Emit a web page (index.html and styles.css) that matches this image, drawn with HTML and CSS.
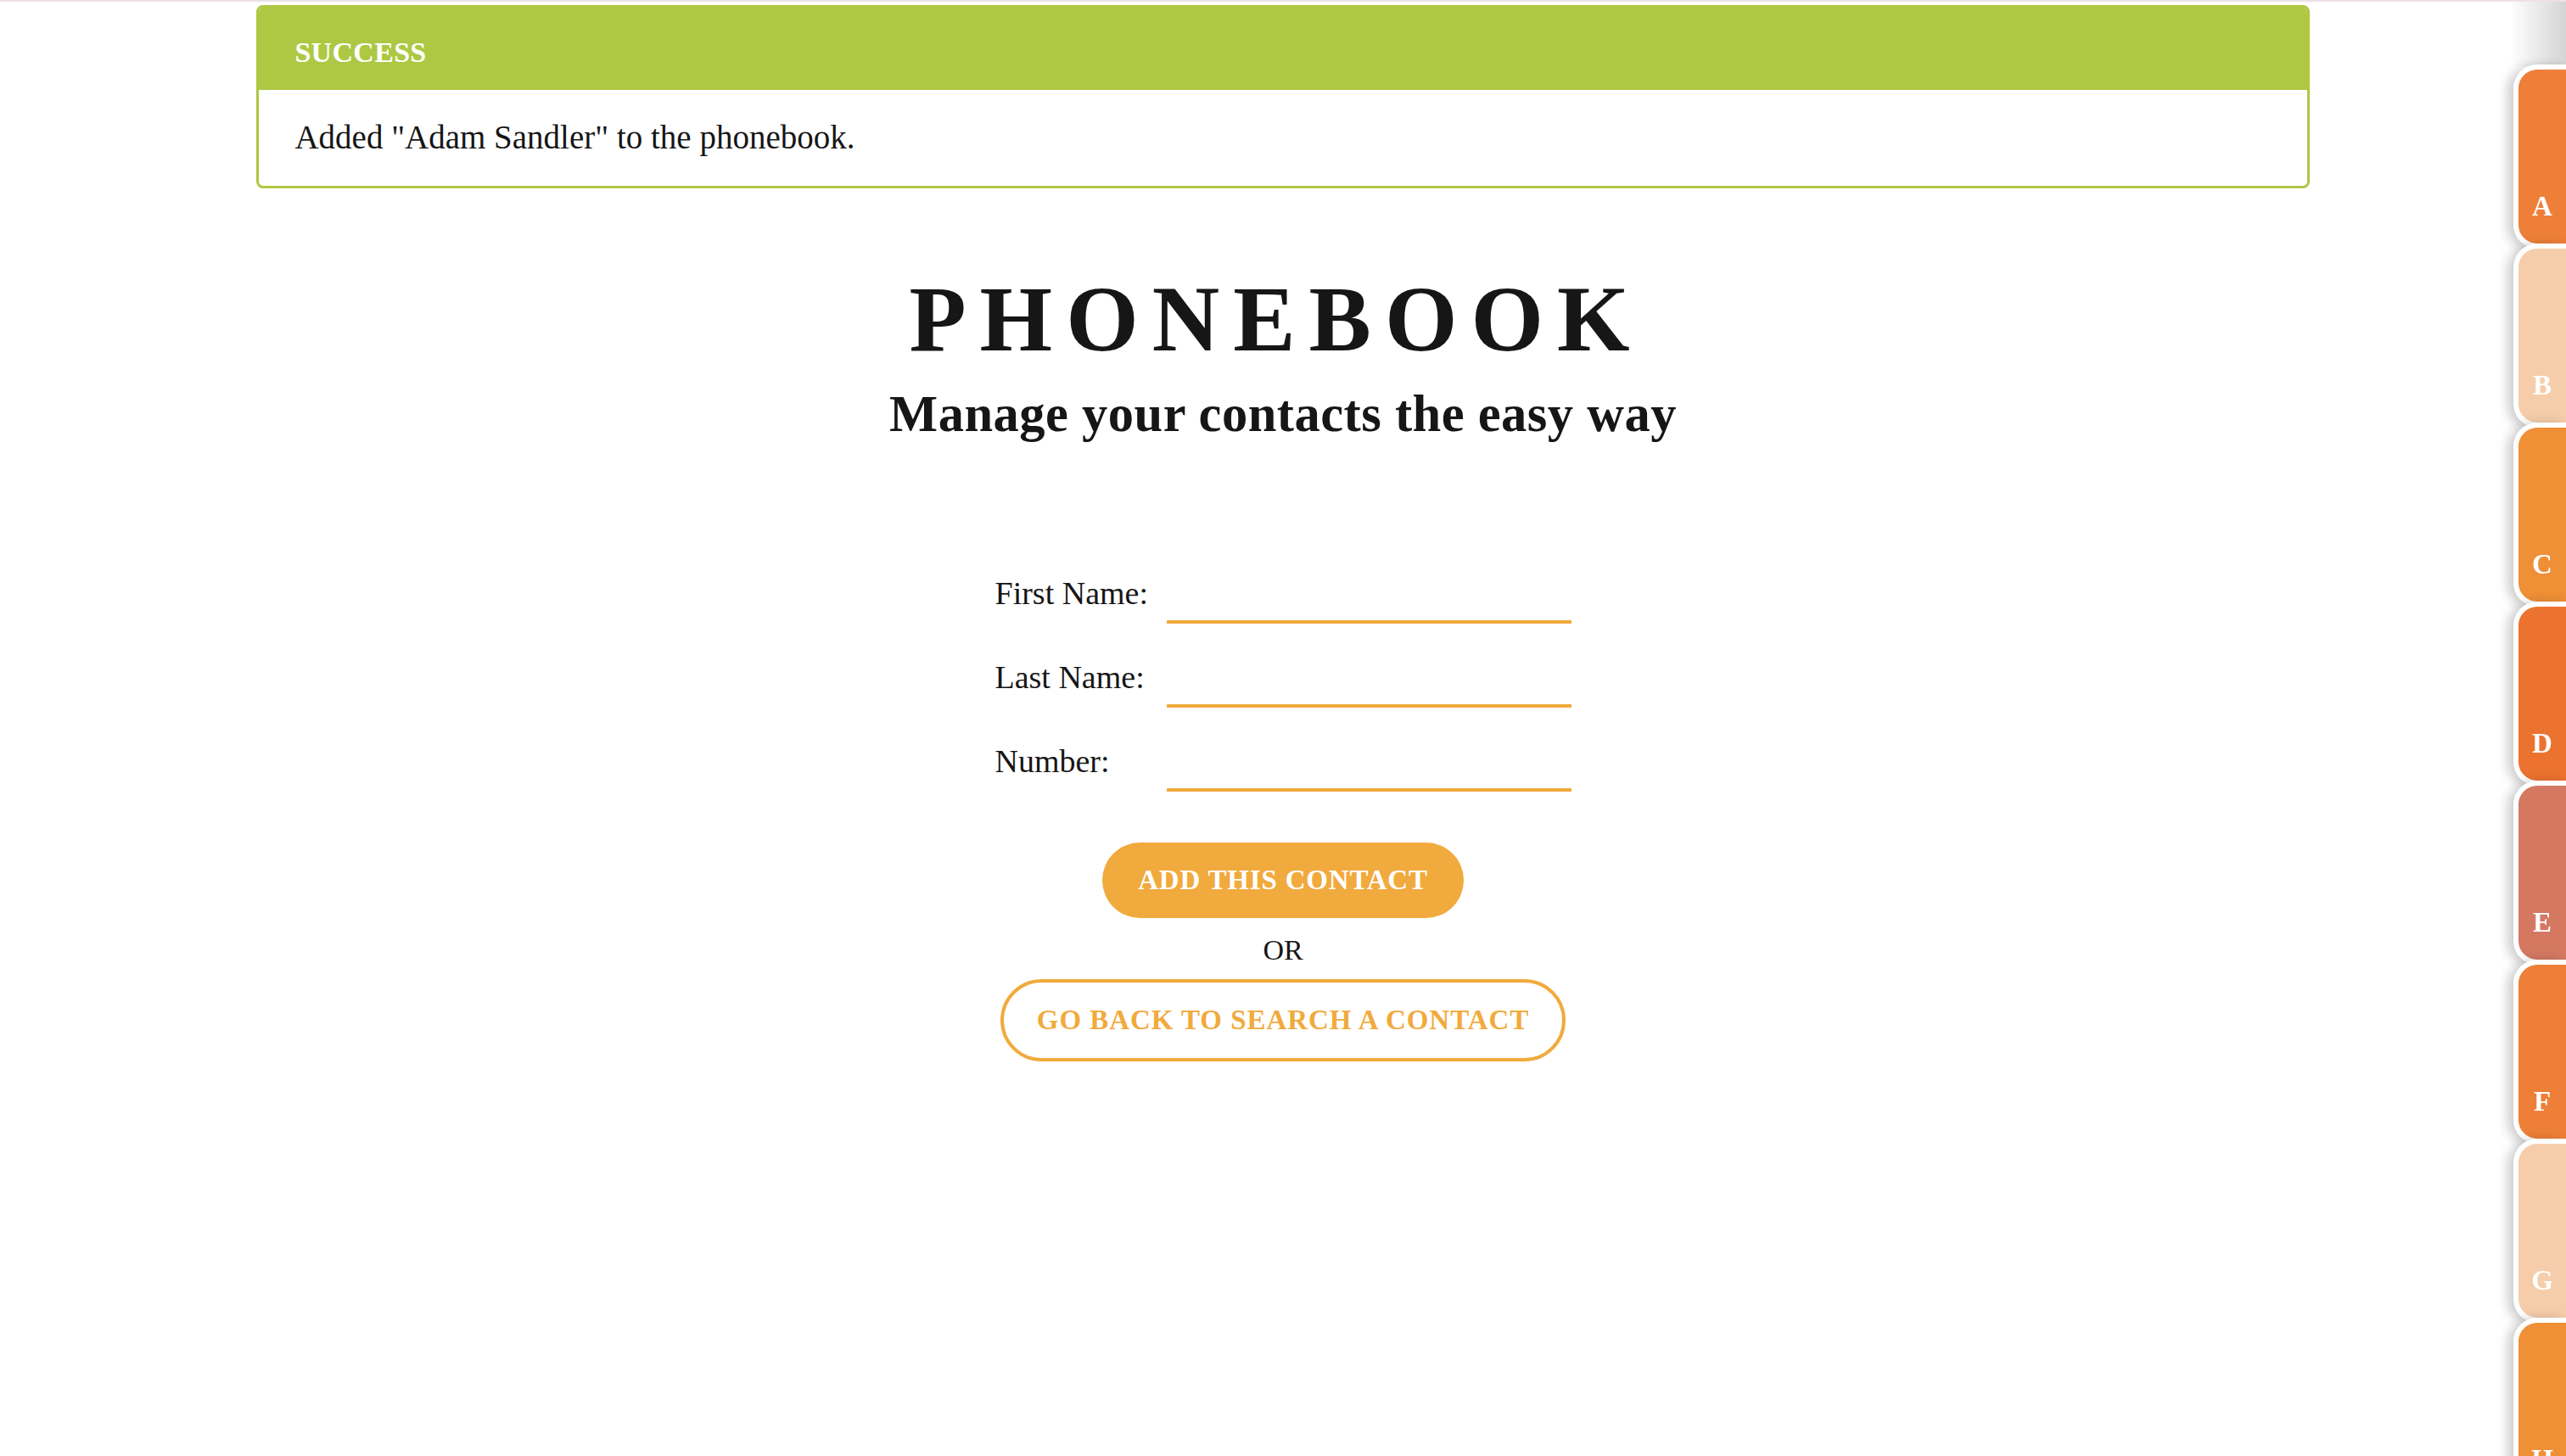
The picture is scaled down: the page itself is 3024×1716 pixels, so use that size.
FILE: index.html
```html
<!DOCTYPE html>
<html lang="en">
<head>
<meta charset="utf-8">
<title>Phonebook</title>
<link rel="stylesheet" href="styles.css">
</head>
<body>
<div class="topline"></div>
<main class="page">
  <section class="alert">
    <div class="alert-head">SUCCESS</div>
    <div class="alert-body">Added "Adam Sandler" to the phonebook.</div>
  </section>

  <header class="hero">
    <h1 class="title">PHONEBOOK</h1>
    <h2 class="subtitle">Manage your contacts the easy way</h2>
  </header>

  <form class="contact-form">
    <div class="field">
      <label class="field-label" for="first">First Name:</label>
      <input class="field-input" id="first" type="text">
    </div>
    <div class="field">
      <label class="field-label" for="last">Last Name:</label>
      <input class="field-input" id="last" type="text">
    </div>
    <div class="field">
      <label class="field-label" for="number">Number:</label>
      <input class="field-input" id="number" type="text">
    </div>
    <div class="actions">
      <button class="btn-primary" type="button">ADD THIS CONTACT</button>
      <span class="or">OR</span>
      <a class="btn-outline" href="#">GO BACK TO SEARCH A CONTACT</a>
    </div>
  </form>
</main>

<nav class="tabs">
  <a class="tab c1" href="#">A</a>
  <a class="tab c2" href="#">B</a>
  <a class="tab c3" href="#">C</a>
  <a class="tab c4" href="#">D</a>
  <a class="tab c5" href="#">E</a>
  <a class="tab c1" href="#">F</a>
  <a class="tab c2" href="#">G</a>
  <a class="tab c3" href="#">H</a>
</nav>
</body>
</html>
```

FILE: styles.css
```css
* { box-sizing: border-box; }

html, body {
  margin: 0;
  padding: 0;
  background: #ffffff;
}

body {
  font-family: "Liberation Serif", "Times New Roman", serif;
  color: #161616;
  overflow: hidden;
}

.topline {
  height: 2px;
  background: #ede1e6;
}

.page {
  width: 100%;
}

.alert {
  width: 80%;
  margin: 4px auto 0;
  border: 3px solid #aec843;
  border-radius: 8px;
  overflow: hidden;
}

.alert-head {
  background: #aec843;
  color: #ffffff;
  font-weight: bold;
  font-size: 34px;
  line-height: 41px;
  padding: 32px 42px 24px;
  letter-spacing: 0.3px;
}

.alert-body {
  font-size: 39px;
  line-height: 57px;
  padding: 27px 42px 29px;
}

.hero {
  text-align: center;
}

.title {
  margin: 88px 0 0;
  padding-right: 16px;
  font-size: 110px;
  line-height: 132px;
  font-weight: bold;
  letter-spacing: 16px;
}

.subtitle {
  margin: 10px 0 0;
  font-size: 60.5px;
  line-height: 71px;
  font-weight: bold;
  letter-spacing: 0.5px;
}

.contact-form {
  width: 679px;
  margin: 152px auto 0;
}

.field {
  display: flex;
  align-items: flex-end;
  height: 60px;
  margin-top: 39px;
}

.field:first-child {
  margin-top: 0;
}

.field-label {
  width: 202px;
  flex: none;
  font-size: 38px;
  line-height: 46px;
  padding-bottom: 13px;
}

.field-input {
  width: 477px;
  height: 60px;
  border: 0;
  border-bottom: 4px solid #f1aa3d;
  padding: 0;
  background: transparent;
  font-family: inherit;
  font-size: 36px;
  outline: none;
}

.actions {
  display: flex;
  flex-direction: column;
  align-items: center;
  margin-top: 60px;
}

.btn-primary {
  height: 89px;
  padding: 0 42px;
  border: 0;
  border-radius: 45px;
  background: #f1aa3d;
  color: #ffffff;
  font-family: inherit;
  font-weight: bold;
  font-size: 33px;
  letter-spacing: 0.8px;
  cursor: pointer;
}

.or {
  font-size: 34px;
  line-height: 41px;
  margin: 17px 0 14px;
}

.btn-outline {
  display: flex;
  align-items: center;
  height: 97px;
  padding: 0 39px;
  border: 4px solid #f1aa3d;
  border-radius: 49px;
  color: #f1aa3d;
  text-decoration: none;
  font-weight: bold;
  font-size: 33px;
  letter-spacing: 0.95px;
}

.tabs {
  position: fixed;
  top: 0;
  right: 0;
  bottom: 0;
  width: 110px;
  padding-top: 76px;
  overflow: hidden;
  display: flex;
  flex-direction: column;
  align-items: flex-end;
}

.tabs::before {
  content: "";
  position: absolute;
  top: 2px;
  right: 0;
  width: 66px;
  height: 76px;
  background: linear-gradient(to right, rgba(0,0,0,0), rgba(0,0,0,0.17));
}

.tab {
  position: relative;
  flex: none;
  width: 62px;
  height: 217px;
  margin-top: -6px;
  border: 6px solid #ffffff;
  border-right: 0;
  border-radius: 28px 0 0 28px;
  box-shadow: -6px 2px 14px rgba(0,0,0,0.22);
  display: flex;
  align-items: flex-end;
  justify-content: center;
  padding-bottom: 27px;
  color: #ffffff;
  text-decoration: none;
  font-weight: bold;
  font-size: 33px;
  line-height: 33px;
}

.tab:first-child {
  margin-top: 0;
}

.c1 { background: #ee7f39; }
.c2 { background: #f6cdaa; }
.c3 { background: #ef8f36; }
.c4 { background: #ec7230; }
.c5 { background: #d47862; }
```
